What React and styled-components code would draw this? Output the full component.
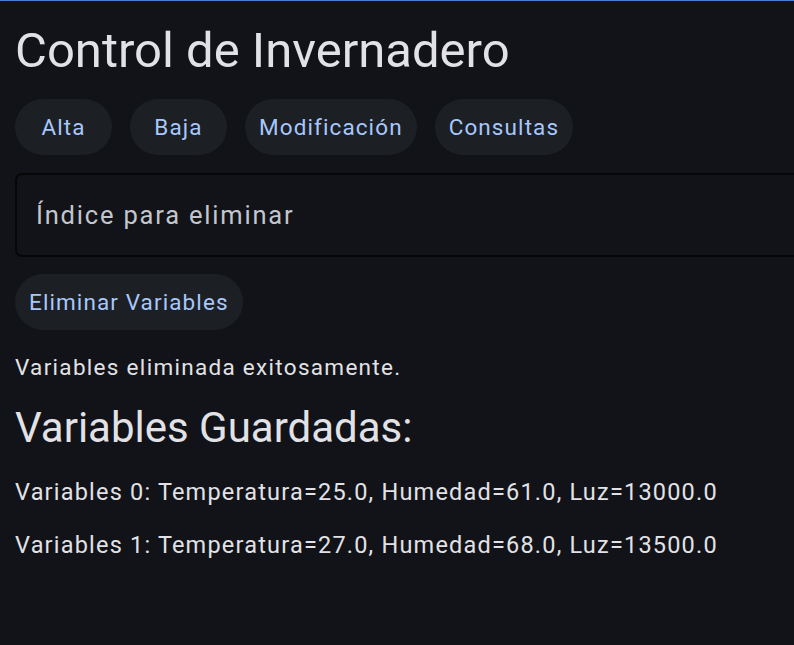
import React from "react";
import styled, { createGlobalStyle } from "styled-components";

const Global = createGlobalStyle`
  html, body { margin: 0; padding: 0; background: #111318; overflow: hidden; }
  body { font-family: Roboto, "Noto Sans", sans-serif; }
`;

const Page = styled.div`
  width: 794px;
  height: 645px;
  box-sizing: border-box;
  border-top: 1px solid #4a80cf;
  background: #111318;
  padding: 12px 0 0 15px;
  display: flex;
  flex-direction: column;
  overflow: hidden;
`;

const Title = styled.h1`
  margin: 0;
  font-weight: 400;
  font-size: 49px;
  line-height: 76px;
  color: #e2e2e6;
  letter-spacing: 0;
`;

const Tabs = styled.div`
  display: flex;
  gap: 18px;
  margin-top: 10px;
`;

const PillButton = styled.button`
  height: 56px;
  min-width: 97px;
  padding: 0 14px;
  border: none;
  border-radius: 28px;
  background: #1c1f24;
  color: #a8c7fa;
  font-family: Roboto, sans-serif;
  font-size: 22.5px;
  font-weight: 400;
  letter-spacing: 1.1px;
  display: inline-flex;
  align-items: center;
  justify-content: center;
  cursor: pointer;
`;

const Field = styled.div`
  margin-top: 18px;
  width: 800px;
  height: 84px;
  box-sizing: border-box;
  border: 2px solid #050607;
  border-radius: 7px;
  display: flex;
  align-items: center;
  padding-left: 19px;
  color: #c4c6cd;
  font-size: 25.5px;
  letter-spacing: 1.8px;
`;

const ActionRow = styled.div`
  margin-top: 17px;
  display: flex;
`;

const Message = styled.p`
  margin: 21px 0 0;
  font-size: 22.5px;
  line-height: 32px;
  letter-spacing: 1.3px;
  color: #e2e2e6;
`;

const Subtitle = styled.h2`
  margin: 15px 0 0;
  font-size: 42px;
  font-weight: 400;
  line-height: 60px;
  color: #e2e2e6;
`;

const List = styled.div`
  display: flex;
  flex-direction: column;
  gap: 21px;
  margin-top: 18px;
`;

const Item = styled.div`
  font-size: 23.5px;
  line-height: 32px;
  letter-spacing: 1.2px;
  color: #e2e2e6;
`;

const tabs = ["Alta", "Baja", "Modificación", "Consultas"];
const vars = [
  "Variables 0: Temperatura=25.0, Humedad=61.0, Luz=13000.0",
  "Variables 1: Temperatura=27.0, Humedad=68.0, Luz=13500.0",
];

export default function App() {
  return (
    <>
      <Global />
      <Page>
        <Title>Control de Invernadero</Title>
        <Tabs>
          {tabs.map((t) => (
            <PillButton key={t}>{t}</PillButton>
          ))}
        </Tabs>
        <Field>Índice para eliminar</Field>
        <ActionRow>
          <PillButton>Eliminar Variables</PillButton>
        </ActionRow>
        <Message>Variables eliminada exitosamente.</Message>
        <Subtitle>Variables Guardadas:</Subtitle>
        <List>
          {vars.map((v) => (
            <Item key={v}>{v}</Item>
          ))}
        </List>
      </Page>
    </>
  );
}
